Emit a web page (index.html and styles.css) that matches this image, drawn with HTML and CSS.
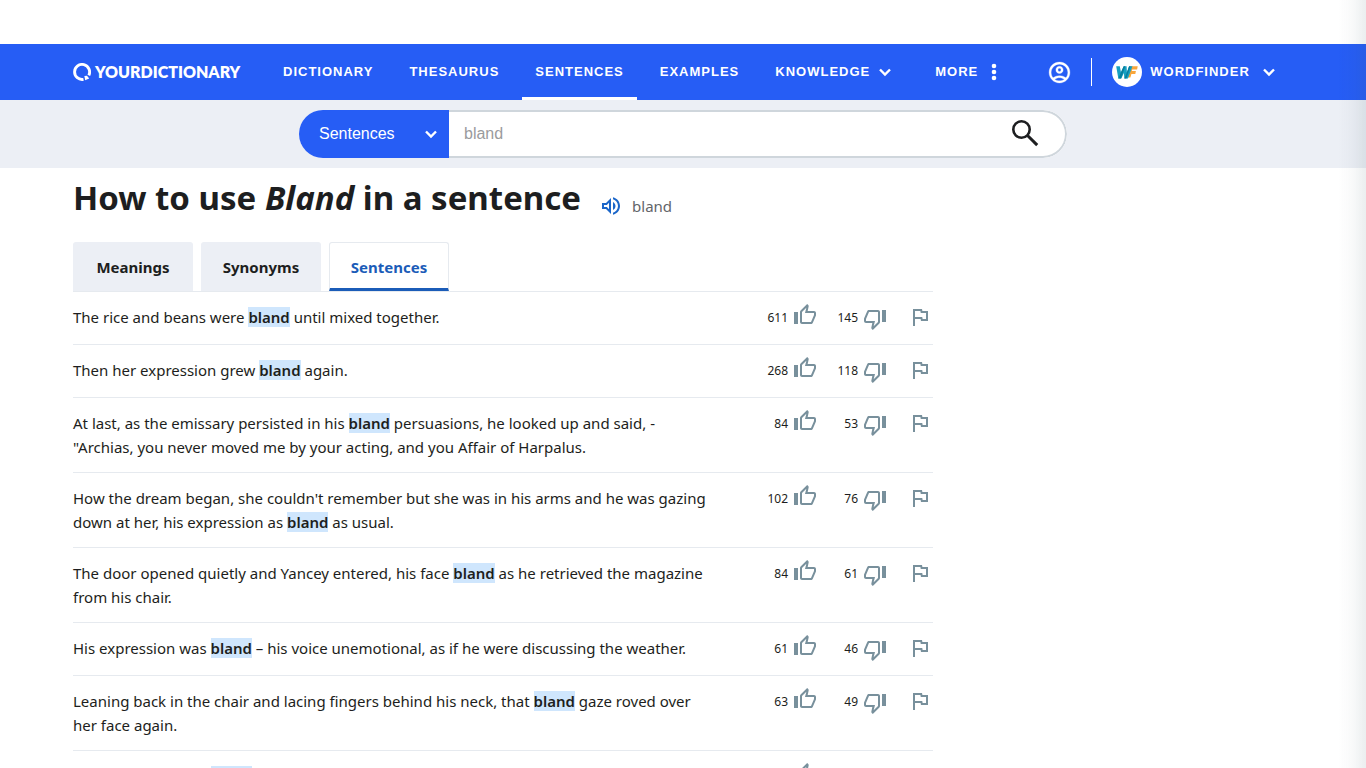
FILE: index.html
```html
<!DOCTYPE html>
<html lang="en">
<head>
<meta charset="utf-8">
<meta name="viewport" content="width=device-width, initial-scale=1">
<title>How to use Bland in a sentence</title>
<link rel="stylesheet" href="styles.css">
</head>
<body>
<svg class="sprite" aria-hidden="true">
  <symbol id="up" viewBox="0 0 24 24"><path d="M9 21h9c.83 0 1.54-.5 1.84-1.22l3.02-7.05c.09-.23.14-.47.14-.73v-2c0-1.1-.9-2-2-2h-6.31l.95-4.57.03-.32c0-.41-.17-.79-.44-1.06L14.17 1 7.58 7.59C7.22 7.95 7 8.45 7 9v10c0 1.1.9 2 2 2zM9 9l4.34-4.34L12 10h9v2l-3 7H9V9zM1 9h4v12H1z"/></symbol>
  <symbol id="down" viewBox="0 0 24 24"><path d="M15 3H6c-.83 0-1.54.5-1.84 1.22l-3.02 7.05c-.09.23-.14.47-.14.73v2c0 1.1.9 2 2 2h6.31l-.95 4.57-.03.32c0 .41.17.79.44 1.06L9.83 23l6.59-6.59c.36-.36.58-.86.58-1.41V5c0-1.1-.9-2-2-2zm0 12l-4.34 4.34L12 14H3v-2l3-7h9v10zm4-12h4v12h-4z"/></symbol>
  <symbol id="flag" viewBox="0 0 24 24"><path d="M12.36 6l.4 2H18v6h-3.36l-.4-2H7V6h5.36M14 4H5v17h2v-7h5.6l.4 2h7V6h-5.6L14 4z"/></symbol>
  <symbol id="chevron" viewBox="0 0 14 14"><path d="M2 4.500l5 5 5-5" fill="none" stroke="currentColor" stroke-width="2.400"/></symbol>
</svg>

<header class="site-header">
  <div class="container header-row">
    <a class="logo" href="#">
      <svg class="logo-mark" viewBox="0 0 18 18" aria-hidden="true"><path d="M10.500 16.300A7.500 7.500 0 1 1 15.800 12.300" fill="none" stroke="currentColor" stroke-width="2.900"/><path d="M11.400 13l2.600-.2 2.200 2.800-4 1.700z" fill="currentColor"/></svg>
      <span>YOURDICTIONARY</span>
    </a>
    <nav class="nav" aria-label="Main">
      <a class="nav-link" href="#">DICTIONARY</a>
      <a class="nav-link" href="#">THESAURUS</a>
      <a class="nav-link nav-link-active" href="#" aria-current="page">SENTENCES</a>
      <a class="nav-link" href="#">EXAMPLES</a>
      <button class="nav-link" type="button">KNOWLEDGE <svg class="chevron"><use href="#chevron"/></svg></button>
      <button class="nav-link nav-more" type="button">MORE <svg class="dots" viewBox="0 0 6 18"><circle cx="3" cy="3" r="2.300"/><circle cx="3" cy="9" r="2.300"/><circle cx="3" cy="15" r="2.300"/></svg></button>
    </nav>
    <div class="account">
      <button class="profile" type="button" aria-label="Account"><svg viewBox="0 0 24 24"><path d="M12 2C6.480 2 2 6.480 2 12s4.480 10 10 10 10-4.480 10-10S17.520 2 12 2zM7.350 18.500C8.660 17.560 10.260 17 12 17s3.340.56 4.650 1.500C15.340 19.440 13.740 20 12 20s-3.340-.56-4.650-1.500zm10.790-1.380C16.450 15.800 14.320 15 12 15s-4.450.8-6.140 2.120C4.700 15.730 4 13.950 4 12c0-4.420 3.580-8 8-8s8 3.580 8 8c0 1.950-.7 3.730-1.860 5.120zM12 6c-1.930 0-3.500 1.570-3.500 3.500S10.070 13 12 13s3.500-1.570 3.500-3.500S13.930 6 12 6zm0 5c-.83 0-1.500-.67-1.500-1.500S11.170 8 12 8s1.500.67 1.500 1.500S12.830 11 12 11z" fill="currentColor" stroke="currentColor" stroke-width=".3"/></svg></button>
      <button class="finder" type="button">
        <svg class="finder-mark" viewBox="0 0 30 30" aria-hidden="true"><circle cx="15" cy="15" r="15" fill="#fff"/><path d="M18.500 9.300h7.200l-.6 3.100h-4.900l-.4 1.700h4.100l-.6 2.800h-3.900l-1 3.600h-3.400z" fill="#f9a63a"/><path d="M4.200 9.300h3.600l1.200 6 2.700-6h2.900l.3 6 2.200-6h3.400l-4.600 12.200h-3.600l-.4-5.500-2.600 5.500H6.300z" fill="#16a0c2"/><path d="M9 15.300l2.700-6h1.600L9 21.500H6.300zM14.900 15.300l2.200-6h1.500l-4.200 12.200h-2z" fill="#087f9e"/></svg>
        WORDFINDER <svg class="chevron finder-chevron"><use href="#chevron"/></svg>
      </button>
    </div>
  </div>
</header>

<div class="search-band">
  <form class="search">
    <div class="scope">
      <select class="scope-select" aria-label="Search in"><option>Sentences</option></select>
      <svg class="chevron scope-chevron" aria-hidden="true"><use href="#chevron"/></svg>
    </div>
    <input class="search-input" type="text" placeholder="bland" aria-label="Search word">
    <button class="search-button" type="button" aria-label="Search"><svg viewBox="0 0 28 28"><circle cx="10.500" cy="10.500" r="8.200" fill="none" stroke="currentColor" stroke-width="2.600"/><path d="M16.500 16.500l9.700 9.600" stroke="currentColor" stroke-width="3"/></svg></button>
  </form>
</div>

<div class="container">
  <main class="content">
    <div class="title-row">
      <h1 class="title">How to use <em>Bland</em> in a sentence</h1>
      <button class="listen" type="button"><svg viewBox="0 0 24 24" aria-hidden="true"><path d="M3 9v6h4l5 5V4L7 9H3zm7-.17v6.340L7.830 13H5v-2h2.830L10 8.830zM16.500 12c0-1.770-1.020-3.290-2.500-4.030v8.050c1.480-.73 2.500-2.250 2.500-4.020zM14 3.230v2.060c2.890.86 5 3.540 5 6.710s-2.110 5.850-5 6.710v2.060c4.010-.91 7-4.490 7-8.770s-2.990-7.860-7-8.770z"/></svg>bland</button>
    </div>
    <nav class="tabs" aria-label="Word sections">
      <a class="tab" href="#">Meanings</a>
      <a class="tab" href="#">Synonyms</a>
      <a class="tab tab-active" href="#" aria-current="page">Sentences</a>
    </nav>
    <ul class="sentences">
      <li class="sentence"><p class="text">The rice and beans were <b>bland</b> until mixed together.</p><button class="vote" type="button">611<svg><use href="#up"/></svg></button><button class="vote vote-down" type="button">145<svg><use href="#down"/></svg></button><button class="report" type="button" aria-label="Report"><svg><use href="#flag"/></svg></button></li>
      <li class="sentence"><p class="text">Then her expression grew <b>bland</b> again.</p><button class="vote" type="button">268<svg><use href="#up"/></svg></button><button class="vote vote-down" type="button">118<svg><use href="#down"/></svg></button><button class="report" type="button" aria-label="Report"><svg><use href="#flag"/></svg></button></li>
      <li class="sentence"><p class="text">At last, as the emissary persisted in his <b>bland</b> persuasions, he looked up and said, -<br>"Archias, you never moved me by your acting, and you Affair of Harpalus.</p><button class="vote" type="button">84<svg><use href="#up"/></svg></button><button class="vote vote-down" type="button">53<svg><use href="#down"/></svg></button><button class="report" type="button" aria-label="Report"><svg><use href="#flag"/></svg></button></li>
      <li class="sentence"><p class="text">How the dream began, she couldn't remember but she was in his arms and he was gazing down at her, his expression as <b>bland</b> as usual.</p><button class="vote" type="button">102<svg><use href="#up"/></svg></button><button class="vote vote-down" type="button">76<svg><use href="#down"/></svg></button><button class="report" type="button" aria-label="Report"><svg><use href="#flag"/></svg></button></li>
      <li class="sentence"><p class="text">The door opened quietly and Yancey entered, his face <b>bland</b> as he retrieved the magazine from his chair.</p><button class="vote" type="button">84<svg><use href="#up"/></svg></button><button class="vote vote-down" type="button">61<svg><use href="#down"/></svg></button><button class="report" type="button" aria-label="Report"><svg><use href="#flag"/></svg></button></li>
      <li class="sentence"><p class="text">His expression was <b>bland</b> – his voice unemotional, as if he were discussing the weather.</p><button class="vote" type="button">61<svg><use href="#up"/></svg></button><button class="vote vote-down" type="button">46<svg><use href="#down"/></svg></button><button class="report" type="button" aria-label="Report"><svg><use href="#flag"/></svg></button></li>
      <li class="sentence"><p class="text">Leaning back in the chair and lacing fingers behind his neck, that <b>bland</b> gaze roved over her face again.</p><button class="vote" type="button">63<svg><use href="#up"/></svg></button><button class="vote vote-down" type="button">49<svg><use href="#down"/></svg></button><button class="report" type="button" aria-label="Report"><svg><use href="#flag"/></svg></button></li>
      <li class="sentence"><p class="text">His expression was <b>bland</b>.</p><button class="vote" type="button" aria-label="Agree"><svg><use href="#up"/></svg></button><button class="vote vote-down" type="button" aria-label="Disagree"><svg><use href="#down"/></svg></button><button class="report" type="button" aria-label="Report"><svg><use href="#flag"/></svg></button></li>
    </ul>
  </main>
</div>
<div class="edge-shade"></div>
</body>
</html>
```

FILE: styles.css
```css
* { box-sizing: border-box; }

body {
  margin: 0;
  padding-top: 44px;
  background: #fff;
  color: #1d1e20;
  font-family: "Noto Sans", "Open Sans", sans-serif;
  font-size: 15px;
  line-height: 24px;
}

a { color: inherit; text-decoration: none; }

button {
  display: flex;
  align-items: center;
  padding: 0;
  border: 0;
  background: none;
  color: inherit;
  font: inherit;
  cursor: pointer;
}

.sprite { position: absolute; width: 0; height: 0; }

.container { max-width: 1252px; margin: 0 auto; padding: 0 16px; }

/* Header */
.site-header { background: #265df5; color: #fff; }

.header-row { display: flex; align-items: stretch; height: 56px; }

.logo {
  display: flex;
  align-items: center;
  gap: 4px;
  width: 197px;
  font-family: Lato, sans-serif;
  font-size: 16px;
  font-weight: 800;
}

.logo-mark { width: 18px; height: 18px; }

.nav { display: flex; gap: 10px; }

.nav-link, .finder {
  display: flex;
  align-items: center;
  font-family: "Liberation Sans", Arial, sans-serif;
  font-size: 13px;
  font-weight: 700;
  letter-spacing: 1px;
}

.nav-link { padding: 2px 13px 0; border-bottom: 3px solid transparent; }
.nav-link-active { border-bottom-color: #fff; }

.chevron { width: 14px; height: 14px; margin-left: 8px; }

.nav-more { margin-left: 7px; }

.dots { width: 6px; height: 18px; margin-left: 13px; fill: currentColor; }

.account { display: flex; align-items: center; margin-left: 37px; }

.profile { height: 28px; padding-right: 19px; border-right: 1px solid #fff; }
.profile svg { width: 25px; height: 25px; }

.finder { margin-left: 20px; }
.finder-mark { width: 30px; height: 30px; margin-right: 8px; }
.finder-chevron { margin-left: 12px; }

/* Search */
.search-band { padding: 10px 16px; background: #eceff5; }

.search {
  display: flex;
  max-width: 768px;
  height: 48px;
  margin: 0 auto;
  overflow: hidden;
  border-radius: 24px;
  background: #fff;
  font-family: "Liberation Sans", Arial, sans-serif;
}

.scope { position: relative; width: 150px; background: #265df5; color: #fff; }

.scope-select {
  width: 100%;
  height: 100%;
  padding: 0 20px 2px;
  border: 0;
  appearance: none;
  background: transparent;
  color: inherit;
  font: 16px "Liberation Sans", Arial, sans-serif;
}

.scope-chevron { position: absolute; top: 17px; right: 11px; pointer-events: none; }

.search-input {
  flex: 1;
  min-width: 0;
  padding: 0 15px;
  border: solid #cfd6dc;
  border-width: 2px 0;
  background: #fff;
  font: 16px "Liberation Sans", Arial, sans-serif;
}

.search-input::placeholder { color: #9a9b9d; }

.search-button {
  padding: 0 26px 2px 0;
  border: 2px solid #cfd6dc;
  border-left: 0;
  border-radius: 0 24px 24px 0;
}

.search-button svg { width: 28px; height: 28px; }

/* Page title and tabs */
.content { max-width: 860px; }

.title-row { display: flex; align-items: flex-start; gap: 18px; padding: 6px 0 20px; }

.title { margin: 0; font-size: 33px; line-height: 48px; font-weight: 700; }

.listen { gap: 9px; margin-top: 20px; color: #626569; }
.listen svg { width: 24px; height: 24px; fill: #1b66c9; }

.tabs { display: flex; gap: 8px; border-bottom: 1px solid #e6eaef; }

.tab {
  width: 120px;
  padding: 13px 0 12px;
  border-radius: 3px 3px 0 0;
  background: #eceff5;
  font-weight: 700;
  text-align: center;
}

.tab-active {
  padding-top: 12px;
  padding-bottom: 9px;
  border: 1px solid #e6eaef;
  border-bottom: 3px solid #1b5cb8;
  background: #fff;
  color: #1b5cb8;
}

/* Sentences */
.sentences { margin: 0; padding: 0; list-style: none; }

.sentence {
  display: flex;
  align-items: flex-start;
  min-height: 53px;
  padding: 13px 0;
  border-bottom: 1px solid #e6eaef;
}

.text { flex: 0 1 635px; margin: 0 auto 0 0; }
.text b { background: #cfe6fd; font-weight: 600; }

.vote {
  justify-content: flex-end;
  gap: 5px;
  width: 70px;
  height: 24px;
  padding-top: 2px;
  font-size: 12px;
}

.vote svg, .report svg { flex: none; width: 24px; height: 24px; fill: #78909c; }
.vote svg { margin-bottom: 6px; }
.vote-down svg { margin: 1px 0 0; }

.report { margin: 0 1px 0 21px; }

/* Soft shade along the window's right edge */
.edge-shade {
  position: fixed;
  top: 0;
  right: 0;
  bottom: 0;
  width: 28px;
  background: linear-gradient(to right, rgba(60, 90, 100, 0), rgba(60, 90, 100, 0.030) 50%, rgba(60, 90, 100, 0.100));
  pointer-events: none;
}
```
